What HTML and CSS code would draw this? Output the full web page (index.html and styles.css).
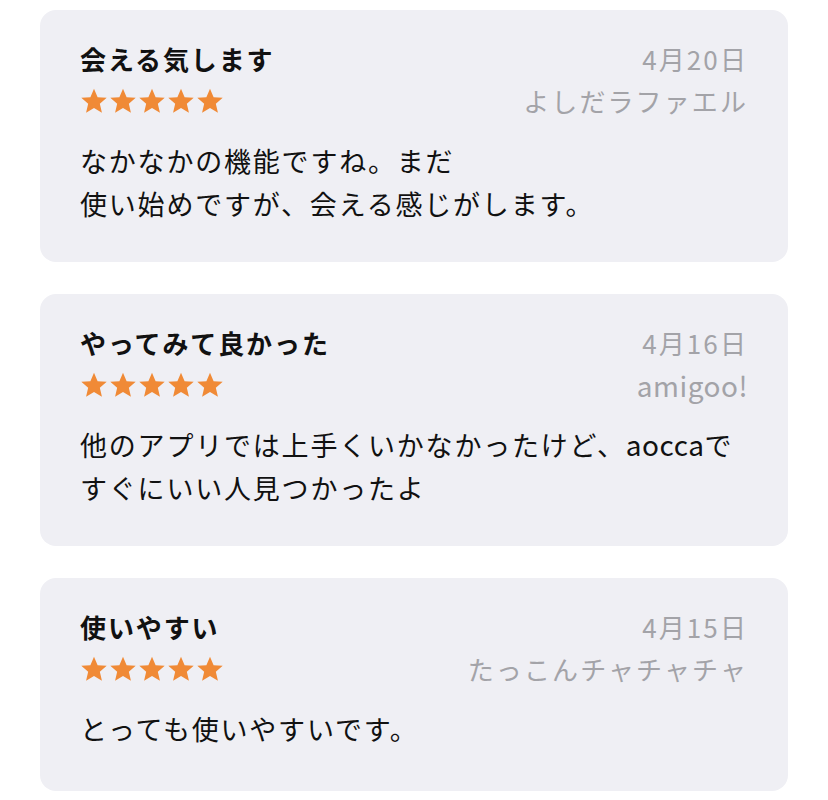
FILE: index.html
```html
<!DOCTYPE html>
<html lang="ja">
<head>
<meta charset="utf-8">
<link rel="stylesheet" href="styles.css">
</head>
<body>
<div class="list">
  <div class="card">
    <div class="row">
      <div class="title">会える気します</div>
      <div class="meta">4月20日</div>
    </div>
    <div class="row">
      <div class="stars">
        <svg viewBox="0 0 24 24"><path d="M12 1.5l3.1 7.2 7.8.6-5.9 5.1 1.8 7.6L12 17.9l-6.8 4.1 1.8-7.6-5.9-5.1 7.8-.6z"/></svg>
        <svg viewBox="0 0 24 24"><path d="M12 1.5l3.1 7.2 7.8.6-5.9 5.1 1.8 7.6L12 17.9l-6.8 4.1 1.8-7.6-5.9-5.1 7.8-.6z"/></svg>
        <svg viewBox="0 0 24 24"><path d="M12 1.5l3.1 7.2 7.8.6-5.9 5.1 1.8 7.6L12 17.9l-6.8 4.1 1.8-7.6-5.9-5.1 7.8-.6z"/></svg>
        <svg viewBox="0 0 24 24"><path d="M12 1.5l3.1 7.2 7.8.6-5.9 5.1 1.8 7.6L12 17.9l-6.8 4.1 1.8-7.6-5.9-5.1 7.8-.6z"/></svg>
        <svg viewBox="0 0 24 24"><path d="M12 1.5l3.1 7.2 7.8.6-5.9 5.1 1.8 7.6L12 17.9l-6.8 4.1 1.8-7.6-5.9-5.1 7.8-.6z"/></svg>
      </div>
      <div class="meta">よしだラファエル</div>
    </div>
    <p class="body">なかなかの機能ですね。まだ<br>使い始めですが、会える感じがします。</p>
  </div>

  <div class="card">
    <div class="row">
      <div class="title">やってみて良かった</div>
      <div class="meta">4月16日</div>
    </div>
    <div class="row">
      <div class="stars">
        <svg viewBox="0 0 24 24"><path d="M12 1.5l3.1 7.2 7.8.6-5.9 5.1 1.8 7.6L12 17.9l-6.8 4.1 1.8-7.6-5.9-5.1 7.8-.6z"/></svg>
        <svg viewBox="0 0 24 24"><path d="M12 1.5l3.1 7.2 7.8.6-5.9 5.1 1.8 7.6L12 17.9l-6.8 4.1 1.8-7.6-5.9-5.1 7.8-.6z"/></svg>
        <svg viewBox="0 0 24 24"><path d="M12 1.5l3.1 7.2 7.8.6-5.9 5.1 1.8 7.6L12 17.9l-6.8 4.1 1.8-7.6-5.9-5.1 7.8-.6z"/></svg>
        <svg viewBox="0 0 24 24"><path d="M12 1.5l3.1 7.2 7.8.6-5.9 5.1 1.8 7.6L12 17.9l-6.8 4.1 1.8-7.6-5.9-5.1 7.8-.6z"/></svg>
        <svg viewBox="0 0 24 24"><path d="M12 1.5l3.1 7.2 7.8.6-5.9 5.1 1.8 7.6L12 17.9l-6.8 4.1 1.8-7.6-5.9-5.1 7.8-.6z"/></svg>
      </div>
      <div class="meta"><span class="latin">amigoo!</span></div>
    </div>
    <p class="body">他のアプリでは上手くいかなかったけど、<span class="latin">aocca</span>で<br>すぐにいい人見つかったよ</p>
  </div>

  <div class="card card-short">
    <div class="row">
      <div class="title">使いやすい</div>
      <div class="meta">4月15日</div>
    </div>
    <div class="row">
      <div class="stars">
        <svg viewBox="0 0 24 24"><path d="M12 1.5l3.1 7.2 7.8.6-5.9 5.1 1.8 7.6L12 17.9l-6.8 4.1 1.8-7.6-5.9-5.1 7.8-.6z"/></svg>
        <svg viewBox="0 0 24 24"><path d="M12 1.5l3.1 7.2 7.8.6-5.9 5.1 1.8 7.6L12 17.9l-6.8 4.1 1.8-7.6-5.9-5.1 7.8-.6z"/></svg>
        <svg viewBox="0 0 24 24"><path d="M12 1.5l3.1 7.2 7.8.6-5.9 5.1 1.8 7.6L12 17.9l-6.8 4.1 1.8-7.6-5.9-5.1 7.8-.6z"/></svg>
        <svg viewBox="0 0 24 24"><path d="M12 1.5l3.1 7.2 7.8.6-5.9 5.1 1.8 7.6L12 17.9l-6.8 4.1 1.8-7.6-5.9-5.1 7.8-.6z"/></svg>
        <svg viewBox="0 0 24 24"><path d="M12 1.5l3.1 7.2 7.8.6-5.9 5.1 1.8 7.6L12 17.9l-6.8 4.1 1.8-7.6-5.9-5.1 7.8-.6z"/></svg>
      </div>
      <div class="meta">たっこんチャチャチャ</div>
    </div>
    <p class="body">とっても使いやすいです。</p>
  </div>
</div>
</body>
</html>
```

FILE: styles.css
```css
* { box-sizing: border-box; }
html, body {
  margin: 0;
  padding: 0;
  background: #ffffff;
}
body {
  font-family: "Noto Sans CJK JP", "Noto Sans", sans-serif;
  color: #111111;
}
.list {
  display: flex;
  flex-direction: column;
  gap: 32px;
  padding: 10px 40px 0 40px;
}
.card {
  background: #efeff4;
  border-radius: 16px;
  padding: 28px 40px 37px 40px;
}
.card-short {
  padding-bottom: 41px;
}
.row {
  display: flex;
  justify-content: space-between;
  align-items: center;
  height: 42px;
}
.title {
  font-size: 26px;
  font-weight: 700;
  letter-spacing: 1.9px;
  line-height: 42px;
}
.meta {
  font-size: 26px;
  color: #a3a3a8;
  letter-spacing: 2.1px;
  line-height: 42px;
}
.latin {
  letter-spacing: 0.5px;
  font-size: 28px;
}
.stars {
  display: flex;
  gap: 1px;
}
.stars svg {
  width: 28px;
  height: 28px;
  fill: #f08a36;
}
.body {
  margin: 17px 0 0 0;
  font-size: 27px;
  line-height: 43px;
  letter-spacing: 1.8px;
}
```
